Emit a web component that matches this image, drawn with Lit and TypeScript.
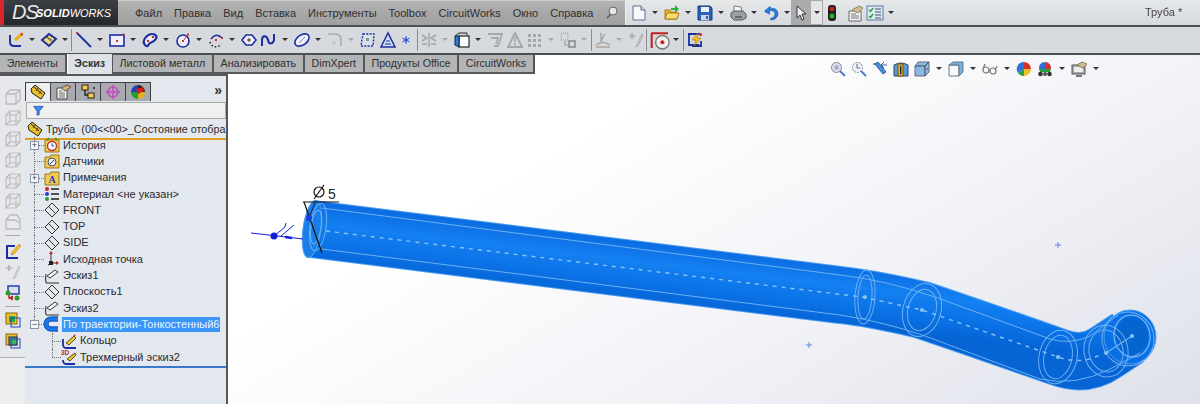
import { LitElement, html, css, svg } from "lit";
import { customElement } from "lit/decorators.js";

const B = "#1b2f9e";
const ic: Record<string, any> = {
  sketch: svg`<path d="M14 2 7 8" stroke="#e8b020" stroke-width="3"/><path d="M14.5 1.5l-1.5 1.5" stroke="#d04040" stroke-width="2.5"/><path d="M13 14H6Q2 14 2 10V3" fill="none" stroke="${B}" stroke-width="2"/><path d="M2 3v8" stroke="#555" stroke-width=".6"/>`,
  dim: svg`<path d="M1 8 8 2l7 5-7 7z" fill="#f2d878" stroke="${B}" stroke-width="2"/><path d="M6 5l5 4" stroke="#222" stroke-width="2" stroke-dasharray="1 1"/>`,
  line: svg`<path d="M1 1 15 15" stroke="${B}" stroke-width="1.8"/><rect x="0" y="0" width="2" height="2" fill="#d03030"/>`,
  rect: svg`<rect x="1" y="3" width="14" height="11" fill="#eef" stroke="${B}" stroke-width="1.6"/><rect x="7" y="8" width="2" height="2" fill="#d03030"/><rect x="13.5" y="1.5" width="2" height="2" fill="#d03030"/>`,
  slot: svg`<path d="M3 13C-1 8 6 2 10 2s6 3 3 6-5 2-6 4-2 3-4 1z" fill="#eef" stroke="${B}" stroke-width="2.2"/><circle cx="6" cy="9" r="1.3" fill="#d03030"/><circle cx="11" cy="5" r="1.3" fill="#d03030"/>`,
  circle: svg`<circle cx="8" cy="9" r="6" fill="#eef" stroke="${B}" stroke-width="1.6"/><path d="M8 9l5-6" stroke="#d03030"/><rect x="7" y="8" width="2" height="2" fill="#d03030"/><rect x="12" y="1.5" width="2" height="2" fill="#d03030"/>`,
  arc: svg`<path d="M3 7Q8 0 14 6" fill="none" stroke="${B}" stroke-width="1.5"/><path d="M2 10a6 6 0 0 0 11 2" fill="none" stroke="#222" stroke-dasharray="1.5 2" stroke-width="1.5"/><rect x="7" y="7" width="2" height="2" fill="#d03030"/><rect x="13" y="5" width="2" height="2" fill="#d03030"/>`,
  poly: svg`<path d="M5 3h6l4 5-4 5H5L1 8z" fill="#eef" stroke="${B}" stroke-width="1.6"/><path d="M6 8h4M8 6v4" stroke="#333"/>`,
  spline: svg`<path d="M1 14V8c0-5 5-5 6 0s5 4 6 0V2" fill="none" stroke="${B}" stroke-width="2"/>`,
  ellipse: svg`<ellipse cx="8" cy="8" rx="8" ry="5" transform="rotate(-35 8 8)" fill="#eef" stroke="${B}" stroke-width="1.6"/><path d="M5 11l6-6" stroke="#888"/>`,
  fillet: svg`<path d="M1 2h7q6 0 6 6v6" fill="none" stroke="#aaa" stroke-width="1.6"/><path d="M5 11h4M7 9v4" stroke="#bbb"/>`,
  plane: svg`<path d="M3 2h11l-1 12H1z" fill="#dde" stroke="${B}" stroke-width="1.4" stroke-dasharray="2 1.3"/><rect x="6" y="6" width="3" height="3" fill="#6a8"/>`,
  text: svg`<path d="M8 1 1 15h14z" fill="#cfe0f4" stroke="${B}" stroke-width="1.5"/><path d="M5 12h6M6 9h4" stroke="${B}"/>`,
  point: svg`<path d="M8 3v10M3.5 5.5l9 5M12.5 5.5l-9 5" stroke="#1c3fe0" stroke-width="1.5"/>`,
  mirror: svg`<path d="M8 1v14" stroke="#a5a5a5" stroke-width="1.5"/><path d="M1 3l5 3-5 3M15 3l-5 3 5 3M1 12h5M10 12h5" fill="none" stroke="#a5a5a5" stroke-width="1.5"/>`,
  convert: svg`<path d="M1 4 5 1h8v2" fill="none" stroke="#222"/><rect x="5" y="4" width="10" height="11" fill="#fff" stroke="#222" stroke-width="1.2"/><path d="M1 4v9l4 2V4z" fill="#2a7de0" stroke="#123"/>`,
  offset: svg`<path d="M1 2h14l-4 12H7M4 6h7l-2 6" fill="none" stroke="#a9a9a9" stroke-width="1.8"/>`,
  warn: svg`<path d="M8 1 15 15H1z" fill="none" stroke="#a5a5a5" stroke-width="1.8"/><path d="M8 5v5M8 11v2" stroke="#a5a5a5" stroke-width="1.6"/>`,
  grid: svg`<path d="M1 2h3v3H1zM6 2h3v3H6zM11 2h3v3h-3zM1 7h3v3H1zM6 7h3v3H6zM11 7h3v3h-3zM1 12h3v3H1zM6 12h3v3H6zM11 12h3v3h-3z" fill="#a8a8a8"/>`,
  move: svg`<rect x="1" y="1" width="7" height="7" fill="none" stroke="#999" stroke-dasharray="1 1"/><rect x="9" y="9" width="6" height="6" fill="none" stroke="#888" stroke-width="1.5"/><path d="M5 9v4h3" fill="none" stroke="#aaa" stroke-width="1.5"/>`,
  repair: svg`<path d="M6 1v10M10 2 6 9M1 13q7-5 14 0" fill="none" stroke="#a5a5a5" stroke-width="1.5"/><path d="M1 15h14" stroke="#b0a090" stroke-width="1.4"/>`,
  relation: svg`<path d="M1 4h6M4 1v6" stroke="#aaa" stroke-width="1.6"/><path d="M14 2 9 13l-1 2 2-1 5-11z" fill="#ddd" stroke="#aaa"/>`,
  display: svg`<path d="M1 2h15M1.5 2v13" stroke="#c02020" stroke-width="1.8"/><circle cx="11" cy="10" r="6" fill="#eee" stroke="#777" stroke-width="1.2"/><circle cx="11" cy="10" r="1.8" fill="#d02020"/>`,
  rapid: svg`<path d="M1 2h13M2 2v11h10M14 9v5H5" fill="none" stroke="${B}" stroke-width="1.8"/><path d="M11 1 5 8h4l-2 6 7-8h-4z" fill="#f0c020" stroke="#a06000" stroke-width=".5"/><circle cx="13.5" cy="2.5" r="1.6" fill="#d03030"/>`,
  newd: svg`<path d="M2 1h8l4 4v10H2z" fill="#f6f8fb" stroke="#5a7390"/><path d="M10 1v4h4" fill="#cdd6e0" stroke="#5a7390"/>`,
  open: svg`<path d="M1 5h5l1 2h6v7H1z" fill="#e8b636" stroke="#a87a10"/><path d="M3 8h12l-2 6H1z" fill="#f8dc70" stroke="#a87a10"/><path d="M7 3h4V0l4 4-4 4V5H7z" fill="#30b030"/>`,
  save: svg`<path d="M1 1h12l2 2v12H1z" fill="#2a60b8" stroke="#143c80"/><rect x="4" y="2" width="8" height="5" fill="#eef3fa"/><rect x="4" y="10" width="8" height="5" fill="#cfd6e0"/><rect x="9" y="11" width="2" height="3" fill="#2a60b8"/>`,
  print: svg`<path d="M4 1l7 1 1 6H4z" fill="#fafafa" stroke="#777"/><path d="M1 8l3-2h9l3 3v4l-4 2H4l-3-3z" fill="#9aa0a8" stroke="#555"/><path d="M5 12h7" stroke="#333"/>`,
  undo: svg`<path d="M8 2 2 7l3 1 1-2c3-1 6 0 6 3s-3 4-5 5l1 1c4 0 7-3 7-6 0-5-5-7-9-5z" fill="#2a78d8" stroke="#1c58a8" stroke-width=".6"/><path d="M7 1v9L1 6z" fill="#2a78d8"/>`,
  cursor: svg`<path d="M3 1v12l3-3 2 5 2-1-2-5h4z" fill="#f2f2f2" stroke="#333"/>`,
  light: svg`<rect x="4" y="0" width="8" height="16" rx="3" fill="#202020"/><circle cx="8" cy="4" r="2.3" fill="#d02020"/><circle cx="8" cy="11" r="2.5" fill="#28b028"/>`,
  options: svg`<path d="M2 6h12v10H2z" fill="#f2f2f2" stroke="#666"/><path d="M4 9h5M4 11h8M4 13h8" stroke="#777"/><path d="M5 5 12 1l4 2-5 5z" fill="#d8b890" stroke="#886"/>`,
  check: svg`<rect x="0" y="1" width="16" height="14" fill="#dce8f4" stroke="#5a7ca0"/><path d="M2 5l1.5 1.5L6 3M2 11l1.5 1.5L6 9" fill="none" stroke="#20a030" stroke-width="1.3"/><path d="M8 4h6M8 7h6M8 10h6M8 13h6" stroke="#456"/>`,
  zoomfit: svg`<circle cx="6.5" cy="6.5" r="5" fill="#dde" stroke="#889"/><rect x="4.5" y="4.5" width="4" height="4" fill="#aab"/><path d="M10 10l5 5" stroke="#4a80c8" stroke-width="2"/>`,
  zoomarea: svg`<circle cx="6.5" cy="6.5" r="5" fill="#eef" stroke="#889" stroke-dasharray="2 1"/><path d="M6 3v4h3" fill="none" stroke="#667"/><path d="M10 10l5 5" stroke="#4a80c8" stroke-width="2"/>`,
  prev: svg`<path d="M3 3l8 10 3-2L6 1z" fill="#4a90d8" stroke="#2a60a8"/><path d="M9 4h6M9 4l3-3M9 4l3 3" stroke="#2a60a8" fill="none"/><path d="M1 3h3" stroke="#333"/>`,
  section: svg`<path d="M1 4Q8 0 15 4v11H1z" fill="#5a9ad8" stroke="#346"/><path d="M5 3h5v12H5z" fill="#e8c030" stroke="#750"/><path d="M7 5h1v8H7" stroke="#444"/>`,
  view: svg`<path d="M4 1h11v10l-4 4H1V5z" fill="#8ab8e8" stroke="#667"/><path d="M1 5l10 0v10M11 5l4-4" fill="none" stroke="#345"/><path d="M8 1v14M1 9h14" stroke="#aaa" stroke-dasharray="1 1"/><path d="M11 8l3 0" stroke="#d03030"/>`,
  cube: svg`<path d="M1 4h10v11H1z" fill="#f7f9fc" stroke="#678"/><path d="M1 4 5 1h10v10l-4 4V4z" fill="#7ab0e0" stroke="#678"/>`,
  glasses: svg`<circle cx="4" cy="9" r="3" fill="none" stroke="#777" stroke-width="1.2"/><circle cx="11" cy="10" r="3" fill="none" stroke="#777" stroke-width="1.2"/><path d="M7 9h1M1 8 3 3M13 9l2-4" stroke="#777" stroke-width="1.2" fill="none"/>`,
  color: svg`<path d="M8 8V1a7 7 0 0 1 7 7z" fill="#d83030"/><path d="M8 8h7a7 7 0 0 1-7 7z" fill="#e8c030"/><path d="M8 8v7a7 7 0 0 1-6-3z" fill="#28a040"/><path d="M8 8 2 12A7 7 0 0 1 8 1z" fill="#3070d8"/>`,
  scene: svg`<path d="M8 8V1a6 6 0 0 1 6 7z" fill="#d83030"/><path d="M8 8H2a6 6 0 0 1 6-7z" fill="#3070d8"/><path d="M2 8h12l-1 3H3z" fill="#28a040"/><circle cx="3.5" cy="13" r="2.3" fill="#333"/><circle cx="12.5" cy="13" r="2.3" fill="#333"/><circle cx="8" cy="13" r="2" fill="#555"/>`,
  screen: svg`<rect x="1" y="4" width="13" height="9" fill="#aaa" stroke="#555"/><rect x="3" y="6" width="9" height="5" fill="#eee"/><path d="M5 14h6v2H5z" fill="#777"/><path d="M6 4l5-3 5 2-4 4z" fill="#d8b890" stroke="#876"/>`,
  part: svg`<path d="M1 5 5 1l10 8-4 6-3-2-6-4z" fill="#e8c028" stroke="#202020"/><path d="M4 3l8 7" stroke="#202020"/><path d="M8 4l-2 3M11 7l-2 3" stroke="#202020" stroke-width=".7"/>`,
  prop: svg`<path d="M2 4h10v11H2z" fill="#f6f6f6" stroke="#444"/><path d="M4 7h3M4 9h6M4 11h6M4 13h6" stroke="#666"/><path d="M6 4l6-3 4 2-6 4z" fill="#d6b080" stroke="#654"/>`,
  config: svg`<rect x="2" y="1" width="6" height="5" fill="#f0d040" stroke="#222"/><rect x="8" y="9" width="6" height="5" fill="#f0d040" stroke="#222"/><path d="M5 6v5h3" fill="none" stroke="#222" stroke-width="1.4"/><circle cx="14" cy="4" r="1" fill="#222"/>`,
  target: svg`<circle cx="8" cy="8" r="5" fill="none" stroke="#c848c8" stroke-width="1.5"/><path d="M8 1v14M1 8h14" stroke="#c848c8" stroke-width="1.5"/>`,
  ball: svg`<path d="M8 8V1a7 7 0 0 1 7 7z" fill="#202020"/><path d="M8 8V1a7 7 0 0 0-7 7z" fill="#2040c0"/><path d="M1 8a7 7 0 0 0 7 7V8z" fill="#20a030"/><path d="M8 8h7a7 7 0 0 1-7 7z" fill="#e0b020"/><path d="M6 5 13 3l1 4-6 3z" fill="#d02020"/>`,
  filter: svg`<path d="M1 2h14L9 9v5l-3 1V9z" fill="#3a8ef0" stroke="#1040b0"/>`,
  history: svg`<path d="M1 3h14v12H1z" fill="#f0c858" stroke="#9a7a10"/><circle cx="8" cy="9" r="4.5" fill="#fff" stroke="#c03030" stroke-width="1.4"/><path d="M8 6.5V9h2" stroke="#22458c" fill="none"/><path d="M3 3l2-2M11 1l2 2" stroke="#20a030" stroke-width="1.6"/>`,
  sensor: svg`<path d="M1 4h5l1-2h8v13H1z" fill="#f0c858" stroke="#9a7a10"/><circle cx="8" cy="9" r="4" fill="#e8eef5" stroke="#555"/><path d="M6 11l4-4" stroke="#22458c"/>`,
  note: svg`<path d="M1 4h5l1-2h8v13H1z" fill="#f0c858" stroke="#9a7a10"/><text x="4.5" y="13" font-size="10" font-weight="700" font-family="Liberation Serif" fill="#1f3fb0">A</text>`,
  material: svg`<circle cx="3" cy="3" r="2" fill="#d02020"/><circle cx="3" cy="8" r="2" fill="#2040d0"/><circle cx="3" cy="13" r="2" fill="#20a030"/><path d="M7 3h8M7 8h8M7 13h8" stroke="#222" stroke-width="1.4"/>`,
  planeT: svg`<path d="M8 1 15 8l-7 7-7-7z" fill="none" stroke="#333"/><path d="M4.5 4.5 11.5 11.5" stroke="#333"/>`,
  origin: svg`<path d="M7 1v11M7 12h7" stroke="#333"/><path d="M5 3l2-3 2 3z" fill="#c02020"/><path d="M12 10l3 2-3 2z" fill="#c02020"/><path d="M4 14l3-2" stroke="#333"/><rect x="5" y="10" width="4" height="4" fill="#222"/>`,
  sketchT: svg`<path d="M2 15H15M2 15Q1 10 2 6" fill="none" stroke="#333" stroke-width="1.1"/><path d="M3 8 11 2l3 2-8 6z" fill="#fafafa" stroke="#333"/>`,
  sweep: svg`<path d="M14 3H7a5 5 0 0 0 0 10h7" fill="none" stroke="#1a78e8" stroke-width="5"/><path d="M14 1H7a7 7 0 0 0 0 14h7M14 5H7a3 3 0 0 0 0 6h7" fill="none" stroke="#0d4aa8" stroke-width=".8"/>`,
  ring: svg`<path d="M13 3 5 10l3 2 7-7z" fill="#f0c028" stroke="#553"/><path d="M14 3l-1-1" stroke="#c03030" stroke-width="2"/><path d="M15 15H5Q2 15 2 11V6" fill="none" stroke="${B}" stroke-width="1.8"/>`,
  sketch3d: svg`<path d="M14 4 6 10l3 2 6-6z" fill="#f0c028" stroke="#553"/><path d="M14 15H5Q2 15 2 11" fill="none" stroke="${B}" stroke-width="1.8"/><text x="0" y="6" font-size="6.5" font-weight="700" font-family="Liberation Sans" fill="#c03030">3D</text>`,
  cubeF: svg`<path d="M1 5h10v10H1zM1 5l4-4h10v10l-4 4M11 5l4-4" fill="none" stroke="#bbb" stroke-width="1.3"/>`,
  cubeW: svg`<path d="M1 5h10v10H1zM5 1h10v10H5zM1 5l4-4M11 5l4-4M1 15l4-4M11 15l4-4" fill="none" stroke="#bbb" stroke-width="1.1"/>`,
  cham: svg`<path d="M1 6 5 1h7l3 5v9H1zM1 6h9l5 3" fill="none" stroke="#bbb" stroke-width="1.3"/>`,
  sk: svg`<path d="M1 3h9M2 3v12h11" fill="none" stroke="#1b2fa0" stroke-width="2"/><path d="M14 1 7 9l-1 3 3-1 7-8z" fill="#f0c028" stroke="#a07010" stroke-width=".5"/>`,
  rel: svg`<path d="M1 4h6M4 1v6" stroke="#b5b5b5" stroke-width="1.7"/><path d="M14 2 9 13l-1 2 2-1 5-11z" fill="#e8e8e8" stroke="#bbb"/>`,
  reposition: svg`<rect x="3" y="1" width="11" height="8" fill="#dde" stroke="#2040c0" stroke-width="1.5"/><path d="M4 9v4h4M8 11l-3 2 3 2" fill="none" stroke="#c02020" stroke-width="1.5"/><circle cx="3" cy="8" r="2.5" fill="#28a028"/><circle cx="12" cy="13" r="2.5" fill="#28a028"/>`,
  asm: svg`<rect x="1" y="1" width="11" height="11" fill="#e8c030" stroke="#886610"/><rect x="4" y="4" width="6" height="6" fill="#28a840"/><rect x="6" y="6" width="9" height="9" fill="none" stroke="#2040c0"/>`,
  asm2: svg`<rect x="1" y="1" width="11" height="11" fill="#e8c030" stroke="#886610"/><rect x="4" y="4" width="8" height="8" fill="#40b060" stroke="#226"/><rect x="6" y="6" width="9" height="9" fill="none" stroke="#2040c0"/>`,
};
const I = (n: string, s = 16) => html`<svg class="i" width=${s} height=${s} viewBox="0 0 16 16">${ic[n]}</svg>`;
const Arrow = (off = false) => html`<span class="arrow ${off ? "off" : ""}"></span>`;

const menu = ["Файл", "Правка", "Вид", "Вставка", "Инструменты", "Toolbox", "CircuitWorks", "Окно", "Справка"];
const tabs = ["Элементы", "Эскиз", "Листовой металл", "Анализировать", "DimXpert", "Продукты Office", "CircuitWorks"];

const tree = [
  { t: "История", i: "history", exp: "+" },
  { t: "Датчики", i: "sensor" },
  { t: "Примечания", i: "note", exp: "+" },
  { t: "Материал <не указан>", i: "material" },
  { t: "FRONT", i: "planeT" },
  { t: "TOP", i: "planeT" },
  { t: "SIDE", i: "planeT" },
  { t: "Исходная точка", i: "origin" },
  { t: "Эскиз1", i: "sketchT" },
  { t: "Плоскость1", i: "planeT" },
  { t: "Эскиз2", i: "sketchT" },
  { t: "По траектории-Тонкостенный6", i: "sweep", exp: "−", sel: true },
  { t: "Кольцо", i: "ring", sub: true },
  { t: "Трехмерный эскиз2", i: "sketch3d", sub: true, last: true },
];

const rings = [
  [865, 296, 10, 27, 7, 22, 4],
  [922, 309, 19, 27, 14, 21, 15],
  [1058, 356, 19, 27, 14, 22, 12],
  [1106, 350, 22, 26, 17, 21, -10],
];
const center = "M312 228L840 294Q870 297 922 309Q990 332 1058 356Q1085 366 1105 352L1128 337";

@customElement("app-root")
export class AppRoot extends LitElement {
  static styles = css`
    :host { display: block; width: 1200px; height: 404px; overflow: hidden; font-family: "Liberation Sans", "Noto Sans", sans-serif; font-size: 11px; color: #2b2b2b; }
    .root { width: 1200px; height: 404px; filter: blur(.35px); display: flex; flex-direction: column; }
    .i { display: block; flex: none; overflow: visible; }
    .top { display: flex; height: 25px; flex: none; }
    .logo { flex: none; width: 106px; border-left: 4px solid #d8262c; background: linear-gradient(#3c3f43, #24272b); color: #fff; display: flex; align-items: center; padding-left: 8px; overflow: hidden; }
    .ds { font: italic 300 20px "Liberation Sans", sans-serif; letter-spacing: -1px; width: 24px; flex: none; color: #e8e8e8; }
    .brand { font: italic 700 11px "Liberation Sans", sans-serif; white-space: nowrap; }
    .brand b { font-weight: 400; }
    .menu { flex: none; width: 507px; background: linear-gradient(#b4b4b4 0, #a8a8a8 50%, #a0a0a0); display: flex; align-items: center; padding-left: 17px; box-sizing: border-box; gap: 12px; color: #2f2f2f; border-top: 1px solid #d0d0d0; white-space: nowrap; }
    .pin { margin-left: auto; margin-right: 7px; }
    .quick { flex: 1; background: linear-gradient(#e6e8ea, #d6d9dd); display: flex; align-items: center; padding-left: 5px; border-left: 1px solid #f0f0f0; position: relative; }
    .btn { margin-right: 4px; }
    .btn.wide { margin-right: 7px; }
    .arrow { display: block; width: 8px; flex: none; margin-right: 5px; height: 8px; position: relative; }
    .arrow::after { content: ""; position: absolute; left: 1px; top: 2px; border: 3px solid transparent; border-top: 3px solid #333; border-bottom: 0; }
    .arrow.off::after { border-top-color: #a8a8a8; }
    .sel { display: flex; align-items: center; height: 23px; margin-left: -5px; margin-right: 1px; border: 1px solid #a8a8a8; background: #e3e5e7; }
    .sel span.c { width: 19px; height: 23px; background: #a9abad; display: flex; align-items: center; justify-content: center; }
    .sel .arrow { margin: 0 1px 0 2px; }
    .title { position: absolute; left: 519px; top: 6px; color: #444; }
    .bar { height: 26px; flex: none; border-top: 2px solid #4d4f52; border-bottom: 2px solid #4d4f52; background: #d6d9dd; display: flex; align-items: center; padding-left: 8px; }
    .sep { width: 1px; height: 22px; background: #8a8c90; margin: 0 3px 0 1px; flex: none; }
    .sep.first { margin-left: -3px; margin-right: 4px; }
    .sep.tight { margin-left: -2px; }
    .stage { flex: 1; position: relative; background: linear-gradient(150deg, #fff 40%, #f2f3f7 68%, #dfe1ea 100%); min-height: 0; display: flex; flex-direction: column; }
    .scene { position: absolute; left: 0; top: 0; }
    .tabsrow { display: flex; height: 19px; flex: none; position: relative; }
    .tabs { display: flex; height: 19px; font-size: 10.7px; }
    .tab { background: #b3b4b6; border-right: 2px solid #55575a; border-bottom: 2px solid #55575a; padding: 0 6.7px; line-height: 17px; box-sizing: border-box; color: #303030; white-space: nowrap; }
    .tab.on { background: #dfe2e7; border-bottom: 0; font-weight: 700; height: 21px; margin-top: -1px; padding-top: 1px; position: relative; border-left: 1px solid #fff; border-right-width: 1px; }
    .hud { display: flex; align-items: center; margin-left: 295px; margin-top: 6px; height: 16px; }
    .hud .btn { margin-right: 5px; }
    .hud .arrow { margin-left: 0; margin-right: 5px; }
    .main { display: flex; flex: 1; position: relative; min-height: 0; }
    .strip { width: 25px; background: #e6e8ec; display: flex; flex-direction: column; align-items: center; padding-top: 13px; box-sizing: border-box; gap: 4.9px; border-top: 2px solid #55575a; }
    .strip hr { width: 15px; border: 0; border-top: 1px solid #aaa; margin: 0; }
    .strip hr.a { margin-bottom: 2px; }
    .strip .lower { flex: 1; align-self: stretch; background: #eceef0; border-top: 1px solid #b0b0b0; margin-top: 4px; }
    .panel { width: 203px; box-sizing: border-box; border-top: 2px solid #55575a; border-right: 2px solid #55575a; background: #e3e7ee; display: flex; flex-direction: column; }
    .ptabs { display: flex; height: 19px; margin-top: 6px; align-items: stretch; flex: none; }
    .ptab { width: 24px; background: #a9a9b0; border: 1px solid #3f4144; border-bottom: 0; border-left: 0; display: flex; align-items: center; justify-content: center; }
    .ptab.on { background: #eceef0; border-left: 1px solid #3f4144; }
    .more { margin-left: auto; margin-right: 4px; font-weight: 700; font-size: 14px; line-height: 17px; color: #333; }
    .filter { height: 15px; flex: none; background: #f0f1ee; border: 1px solid #aaa; margin: 1px 0 0 1px; padding-left: 6px; display: flex; align-items: center; }
    .rootrow { display: flex; align-items: center; height: 19px; padding-left: 2px; flex: none; gap: 3px; border-bottom: 2px solid #e2a020; white-space: pre; overflow: hidden; font-size: 10.8px; }
    .tree { position: relative; margin-top: -3px; border-bottom: 2px solid #3a78c8; padding-bottom: 1px; flex: none; overflow: hidden; }
    .row { position: relative; height: 16.3px; display: flex; align-items: center; padding-left: 19px; gap: 2px; white-space: nowrap; }
    .row.sub { padding-left: 36px; }
    .row .h { position: absolute; left: 9px; top: 50%; width: 10px; border-top: 1px dotted #777; }
    .row.sub .h { left: 27px; width: 9px; }
    .row .v { position: absolute; left: 9px; top: 0; height: 100%; border-left: 1px dotted #777; }
    .row.sub .v.two { left: 27px; }
    .row.sub.last .v.two { height: 50%; }
    .row.tail .v { height: 50%; }
    .exp { position: absolute; left: 5px; top: 4px; width: 7px; height: 7px; border: 1px solid #8a94a6; background: #f6f7fa; line-height: 6px; text-align: center; font-size: 9px; color: #344; z-index: 1; }
    .row .lab { padding: 0 1px; line-height: 15px; }
    .row.hl .lab { background: #3a96f8; color: #eaf4ff; }
  `;

  render() {
    return html`<div class="root">
      <div class="top">
        <div class="logo"><span class="ds">DS</span><span class="brand">SOLID<b>WORKS</b></span></div>
        <div class="menu">
          ${menu.map((m) => html`<span>${m}</span>`)}
          <span class="pin"><svg class="i" width="13" height="15" viewBox="0 0 13 15"><path d="M2 12 6 8" stroke="#555" stroke-width="1.5"/><circle cx="8" cy="5" r="4" fill="#e8e8e8" stroke="#666"/></svg></span>
        </div>
        <div class="quick">
          ${["newd", "open", "save", "print", "undo"].map((n) => html`<span class="btn">${I(n)}</span>${Arrow()}`)}
          <span class="sel"><span class="c">${I("cursor")}</span>${Arrow()}</span>
          <span class="btn wide">${I("light")}</span>
          <span class="btn">${I("options")}</span>
          <span class="btn">${I("check")}</span>${Arrow()}
          <span class="title">Труба *</span>
        </div>
      </div>
      <div class="bar">
        ${["sketch", "dim"].map((n) => html`<span class="btn">${I(n)}</span>${Arrow()}`)}
        <span class="sep first"></span>
        ${["line", "rect", "slot", "circle", "arc"].map((n) => html`<span class="btn">${I(n)}</span>${Arrow()}`)}
        <span class="btn">${I("poly")}</span>
        <span class="btn">${I("spline")}</span>${Arrow()}
        <span class="btn">${I("ellipse")}</span>${Arrow()}
        <span class="btn">${I("fillet")}</span>${Arrow(true)}
        <span class="btn">${I("plane")}</span>
        <span class="btn">${I("text")}</span>
        <span class="btn">${I("point", 12)}</span>
        <span class="sep"></span>
        <span class="btn">${I("mirror")}</span>${Arrow(true)}
        <span class="btn">${I("convert")}</span>${Arrow()}
        <span class="btn">${I("offset")}</span>
        <span class="btn">${I("warn")}</span>
        <span class="btn">${I("grid")}</span>${Arrow(true)}
        <span class="btn">${I("move")}</span>${Arrow(true)}
        <span class="sep tight"></span>
        <span class="btn">${I("repair")}</span>${Arrow(true)}
        <span class="btn">${I("relation")}</span>
        <span class="sep tight"></span>
        <span class="btn">${I("display", 18)}</span>${Arrow()}
        <span class="sep tight"></span>
        <span class="btn">${I("rapid")}</span>
      </div>
      <div class="stage">
        <svg class="scene" width="1200" height="350" viewBox="0 54 1200 350">
          <defs>
            <linearGradient id="tube" gradientUnits="userSpaceOnUse" x1="600" y1="235" x2="593" y2="295">
              <stop offset="0" stop-color="#0a6ce0"/><stop offset=".35" stop-color="#1480f2"/><stop offset=".7" stop-color="#0a72e6"/><stop offset="1" stop-color="#0664d4"/>
            </linearGradient>
          </defs>
          <path d=${center} fill="none" stroke="#4b9ff5" stroke-width="58"/>
          <path d=${center} fill="none" stroke="url(#tube)" stroke-width="56"/>
          <ellipse cx="1130" cy="336" rx="26" ry="27" fill="#0a70e6" stroke="#4b9ff5"/>
          <ellipse cx="1132" cy="335" rx="16" ry="19" fill="#0564d0"/>
          <ellipse cx="312" cy="228" rx="9" ry="29" fill="#1a7ee8" stroke="#4b9ff5" transform="rotate(8 312 228)"/>
          <g fill="none" stroke="#6db0f2" stroke-width="1">
            <path d="M322 207 840 274Q885 279 935 296L1050 338Q1070 344 1090 335L1118 314"/>
            <path d="M322 248 840 314Q885 321 925 335L1040 378Q1075 386 1110 368L1140 352"/>
            <ellipse cx="318" cy="226" rx="8" ry="24" transform="rotate(8 318 226)"/>
            <ellipse cx="316" cy="226" rx="5" ry="17" transform="rotate(8 316 226)"/>
            ${rings.map((r) => svg`<g transform="rotate(${r[6]} ${r[0]} ${r[1]})"><ellipse cx=${r[0]} cy=${r[1]} rx=${r[2]} ry=${r[3]}/><ellipse cx=${r[0]} cy=${r[1]} rx=${r[4]} ry=${r[5]}/></g>`)}
            <ellipse cx="1132" cy="335" rx="18" ry="21" stroke="#8ac2f5" transform="rotate(-10 1132 335)"/>
            <ellipse cx="1128" cy="338" rx="26" ry="27" transform="rotate(-10 1128 338)"/>
            <path d="M1106 352 1132 335" stroke-width="1.4"/>
            <path d="M326 230 862 296 922 309 1058 356Q1080 364 1100 354" stroke="#8ac2f5" stroke-width="1.4" stroke-dasharray="4 5"/>
          </g>
          <g fill="#8ac2f5">
            <circle cx="865" cy="296" r="2"/><circle cx="922" cy="309" r="2"/><circle cx="1058" cy="356" r="2"/><circle cx="1106" cy="352" r="2"/><circle cx="1132" cy="335" r="2"/>
          </g>
          <path d="M1058 241v6M1055 244h6M809 341v6M806 344h6" stroke="#5a86e0"/>
          <g fill="none" stroke="#111" stroke-width="1.2">
            <path d="M303 201H339"/><path d="M304 201 322 252"/>
            <path d="M310 214 315 202" stroke-width=".8"/>
            <circle cx="319" cy="191" r="5"/><path d="M314 198 324 184"/>
          </g>
          <text x="328" y="198" font-family="Liberation Sans" font-size="14" fill="#222">5</text>
          <circle cx="309" cy="217" r="3" fill="#1c3cd8"/>
          <g stroke="#1020e0" fill="none">
            <path d="M251 232 303 238"/><path d="M274 235 285 226 286 222M281 235 294 224"/>
            <path d="M285 236 292 237" stroke-width="2.5"/>
          </g>
          <circle cx="274" cy="235" r="3.5" fill="#1020d8"/>
        </svg>
        <div class="tabsrow">
          <div class="tabs">${tabs.map((t, i) => html`<div class="tab ${i === 1 ? "on" : ""}">${t}</div>`)}</div>
          <div class="hud">
            ${["zoomfit", "zoomarea", "prev", "section"].map((n) => html`<span class="btn">${I(n)}</span>`)}
            <span class="btn">${I("view")}</span>${Arrow(false)}
            <span class="btn">${I("cube")}</span>${Arrow(false)}
            <span class="btn">${I("glasses")}</span>${Arrow(false)}
            <span class="btn">${I("color")}</span>
            <span class="btn">${I("scene")}</span>${Arrow(false)}
            <span class="btn">${I("screen")}</span>${Arrow(false)}
          </div>
        </div>
        <div class="main">
          <div class="strip">
            ${["cubeF", "cubeW", "cubeW", "cubeW", "cubeW", "cubeW", "cham"].map((n) => I(n))}
            <hr class="a" />
            ${I("sk")} ${I("rel")} ${I("reposition")}
            <hr />
            ${I("asm")} ${I("asm2")}
            <div class="lower"></div>
          </div>
          <div class="panel">
            <div class="ptabs">
              <div class="ptab on">${I("part")}</div>
              <div class="ptab">${I("prop")}</div>
              <div class="ptab">${I("config")}</div>
              <div class="ptab">${I("target")}</div>
              <div class="ptab">${I("ball")}</div>
              <span class="more">»</span>
            </div>
            <div class="filter">${I("filter", 11)}</div>
            <div class="rootrow">${I("part")}<span>Труба  (00&lt;&lt;00&gt;_Состояние отобра</span></div>
            <div class="tree">
              ${tree.map((r, i) => html`<div class="row ${r.sub ? "sub" : ""} ${r.sel ? "hl" : ""} ${r.last ? "last" : ""} ${i === 11 ? "tail" : ""}">
                ${r.sub ? html`<span class="v two"></span>` : i <= 11 ? html`<span class="v"></span>` : ""}
                <span class="h"></span>
                ${r.exp ? html`<span class="exp">${r.exp}</span>` : ""}
                ${I(r.i)}<span class="lab">${r.t}</span>
              </div>`)}
            </div>
          </div>
        </div>
      </div>
    </div>`;
  }
}
